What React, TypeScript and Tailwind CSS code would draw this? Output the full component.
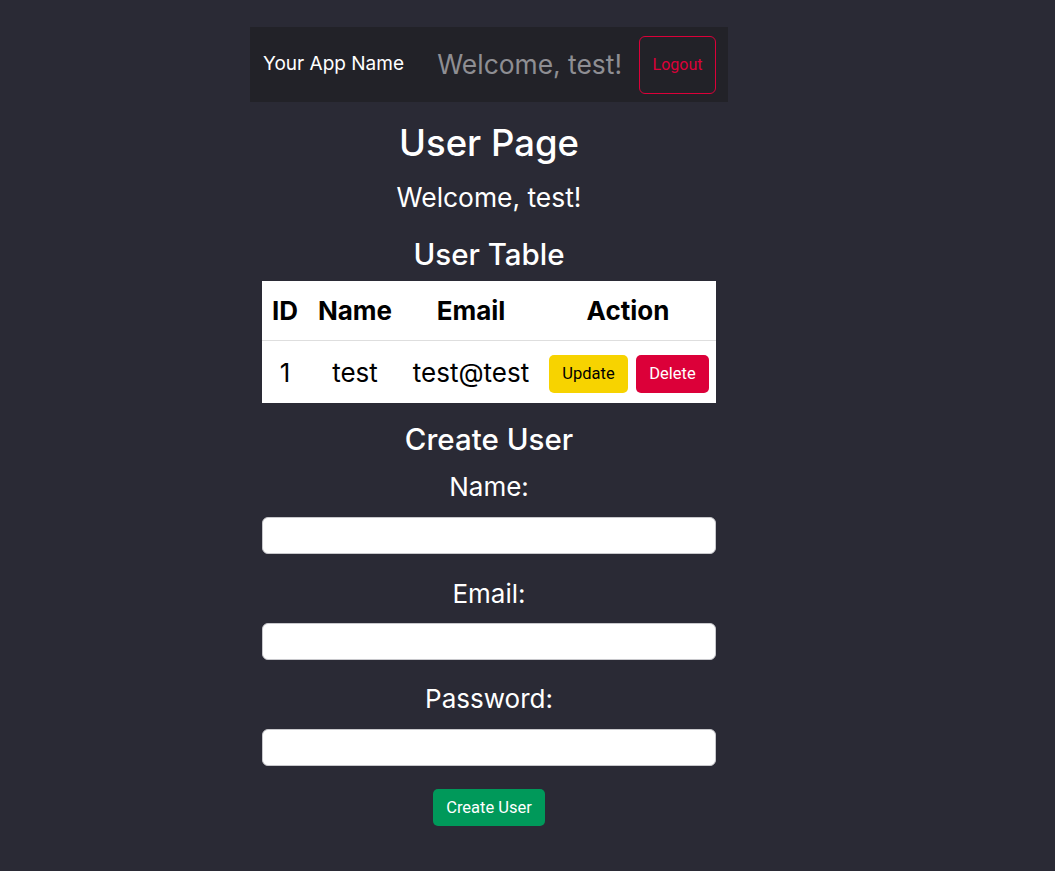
export default function App() {
  return (
    <div className="min-h-[871px] w-full bg-[#2a2a35] font-['Inter',sans-serif] text-white">
      <div className="ml-[250px] w-[478px] pt-[27px]">
        {/* Navbar */}
        <nav className="flex h-[75px] items-center justify-between bg-[#222228] pl-[13px] pr-3">
          <span className="text-[19px] text-white">Your App Name</span>
          <div className="flex items-center gap-[17px]">
            <span className="text-[26.4px] text-[#8e8e93]">Welcome, test!</span>
            <button className="h-[58px] w-[77px] rounded-[6px] border border-[#dc0039] font-['Roboto',sans-serif] text-[16px] text-[#dc0039]">
              Logout
            </button>
          </div>
        </nav>

        {/* Content */}
        <div className="flex flex-col items-center px-3 text-center">
          <h1 className="mt-[20px] text-[36.5px] font-medium leading-[1.2]">User Page</h1>
          <p className="mt-[16px] text-[26.4px] leading-[1.2]">Welcome, test!</p>

          <h2 className="mt-[24px] text-[29.5px] font-medium leading-[35px]">User Table</h2>
          <div className="mt-[9px] w-full bg-white text-black">
            <div className="grid h-[60px] grid-cols-[46px_94px_138px_176px] items-center border-b border-[#dedede] text-[26px] font-bold">
              <div>ID</div>
              <div>Name</div>
              <div>Email</div>
              <div>Action</div>
            </div>
            <div className="grid h-[62px] grid-cols-[46px_94px_138px_176px] items-center text-[26px]">
              <div>1</div>
              <div>test</div>
              <div>test@test</div>
              <div className="flex justify-center gap-2 pl-[2px] pt-1 font-['Roboto',sans-serif]">
                <button className="h-[38px] w-[79px] rounded-[5px] bg-[#f7d300] text-[16.5px] text-black">Update</button>
                <button className="h-[38px] w-[73px] rounded-[5px] bg-[#dc0039] text-[16.5px] text-white">Delete</button>
              </div>
            </div>
          </div>

          <h2 className="mt-[19px] text-[29.5px] font-medium leading-[35px]">Create User</h2>
          <label className="mt-[15px] text-[26px] leading-[30px]">Name:</label>
          <input className="mt-[15px] h-[37px] w-full rounded-[6px] border border-[#c8c8cc] bg-white" />
          <label className="mt-[25px] text-[26px] leading-[30px]">Email:</label>
          <input className="mt-[14px] h-[37px] w-full rounded-[6px] border border-[#c8c8cc] bg-white" />
          <label className="mt-[24px] text-[26px] leading-[30px]">Password:</label>
          <input className="mt-[15px] h-[37px] w-full rounded-[6px] border border-[#c8c8cc] bg-white" />
          <button className="mt-[23px] h-[37px] w-[112px] rounded-[5px] bg-[#00995a] font-['Roboto',sans-serif] text-[16.5px] text-white">
            Create User
          </button>
        </div>
      </div>
    </div>
  );
}
